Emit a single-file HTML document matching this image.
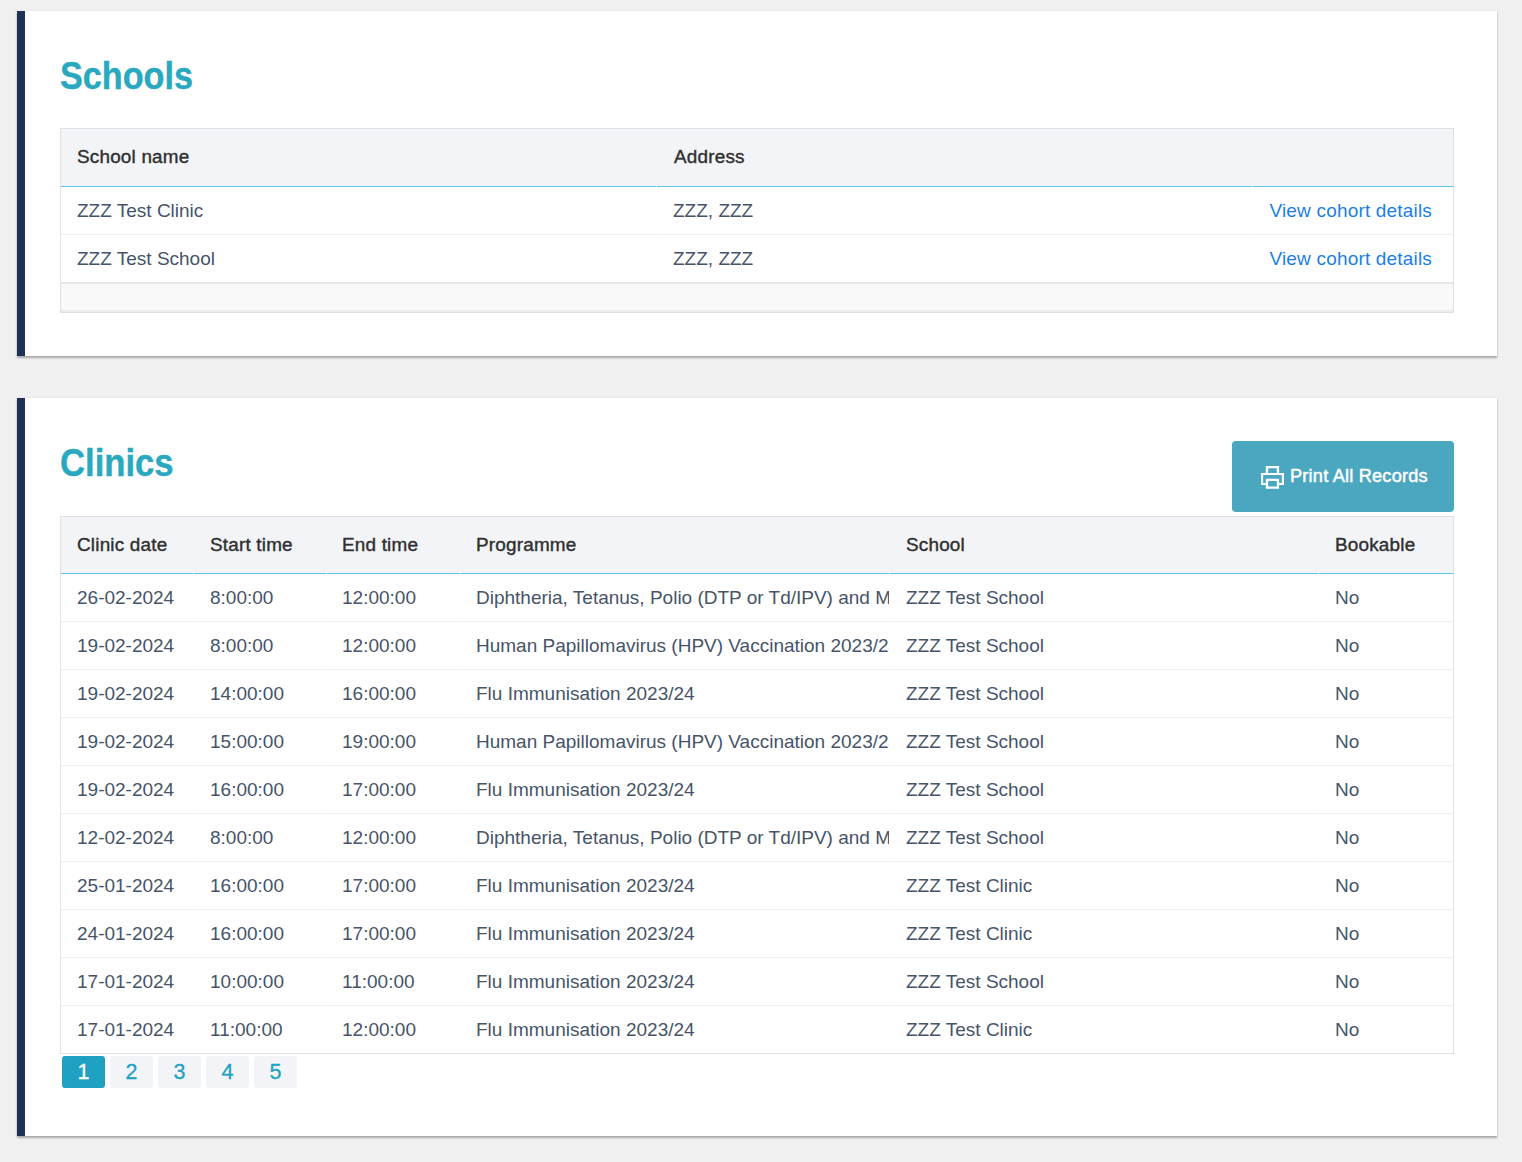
<!DOCTYPE html>
<html><head><meta charset="utf-8"><title>Schools and Clinics</title>
<style>
*{box-sizing:border-box;margin:0;padding:0}
html,body{width:1522px;height:1162px;overflow:hidden;background:#f0f0f0;font-family:"Liberation Sans",sans-serif}
.card{position:absolute;left:17px;width:1480px;background:#fff;border-left:8px solid #1e3158;box-shadow:0 2px 2px rgba(0,0,0,.3),0 0 2px rgba(0,0,0,.08)}
.h{position:absolute;left:60px;font-weight:bold;color:#29a8c0;font-size:38px;line-height:40px;white-space:nowrap;transform-origin:0 0;transform:scaleX(.9);-webkit-text-stroke:.4px #29a8c0}
.tb{position:absolute;left:60px;width:1394px;background:#fff;border:1px solid #dde1e5}
.hd{position:absolute;left:0;right:0;background:#f3f4f7;border-bottom:1px solid #5ac8e3}
.r{position:absolute;left:0;right:0;height:48px;border-bottom:1px solid #eceef1}
.c{position:absolute;top:0;white-space:nowrap;overflow:hidden;padding-left:16px}
.hd .c{font-weight:normal;font-size:18.9px;color:#303030;-webkit-text-stroke:.4px #303030;letter-spacing:.2px}
.r .c{font-size:19px;color:#465469;height:47px;line-height:47px}
a{color:#1a7fe4;text-decoration:none;letter-spacing:.18px}
.btn{position:absolute;left:1232px;top:441px;width:222px;height:71px;border-radius:4px;background:#4ba7bf;color:#fff;font-weight:normal;font-size:18.2px;-webkit-text-stroke:.45px #fff;letter-spacing:.2px}
.pg{position:absolute;top:1056px;width:43px;height:32px;border-radius:3px;background:#f2f4f7;color:#1ea1c2;font-size:21.5px;line-height:32px;text-align:center;-webkit-text-stroke:.3px currentColor}
.pg.on{background:#1ea1c2;color:#fff}
</style></head>
<body>
<div class="card" style="top:11px;height:345px"></div>
<div class="card" style="top:398px;height:738px"></div>
<div class="h" style="top:55.6px">Schools</div>
<div class="tb" style="top:128px;height:185px">
<div class="hd" style="top:0;height:58px">
<div class="c" style="left:0px;width:595px;height:57px;line-height:55px;padding-left:16px">School name</div>
<div class="c" style="left:595px;width:596px;height:57px;line-height:55px;padding-left:18px">Address</div>
<div class="c" style="left:1191px;width:201px;height:57px;line-height:55px;padding-left:16px"></div>
</div>
<div class="r" style="top:58px">
<div class="c" style="left:0;width:595px">ZZZ Test Clinic</div>
<div class="c" style="left:595px;width:596px;padding-left:17px">ZZZ, ZZZ</div>
<div class="c" style="left:1191px;width:201px;text-align:right;padding:0 21px 0 0"><a href="#">View cohort details</a></div>
</div>
<div class="r" style="top:106px">
<div class="c" style="left:0;width:595px">ZZZ Test School</div>
<div class="c" style="left:595px;width:596px;padding-left:17px">ZZZ, ZZZ</div>
<div class="c" style="left:1191px;width:201px;text-align:right;padding:0 21px 0 0"><a href="#">View cohort details</a></div>
</div>
<div style="position:absolute;left:0;right:0;top:153px;height:1px;background:#e6e6e6"></div>
<div style="position:absolute;left:0;right:0;top:154px;height:1px;background:#e6e6e6"></div>
<div style="position:absolute;left:0;right:0;top:155px;height:26px;background:#f9f9f9"></div>
<div style="position:absolute;left:0;right:0;top:181px;height:2px;background:#ebebeb"></div>
</div>
<div class="h" style="top:442.6px;transform:scaleX(.912)">Clinics</div>
<div class="btn"><svg width="23" height="23" viewBox="0 0 23 23" style="position:absolute;left:29px;top:25px">
<path fill="#fff" fill-rule="evenodd" d="M0 7H23V19H0ZM2.1 9.1H20.8V16.9H2.1Z"/>
<path fill="#fff" fill-rule="evenodd" d="M4.8 0H18.1V7.5H4.8ZM7.1 2.3H15.8V7.5H7.1Z"/>
<rect x="4.8" y="12.8" width="13.3" height="10" fill="#4ba7bf"/>
<path fill="#fff" fill-rule="evenodd" d="M4.8 12.8H18.1V22.8H4.8ZM7.1 14.9H15.8V20.6H7.1Z"/>
</svg><span style="position:absolute;left:58px;top:0;line-height:71px;white-space:nowrap">Print All Records</span></div>
<div class="tb" style="top:516px;height:538px">
<div class="hd" style="top:0;height:57px">
<div class="c" style="left:0px;width:132px;height:56px;line-height:56px;padding-left:16px">Clinic date</div>
<div class="c" style="left:132px;width:133px;height:56px;line-height:56px;padding-left:17px">Start time</div>
<div class="c" style="left:265px;width:134px;height:56px;line-height:56px;padding-left:16px">End time</div>
<div class="c" style="left:399px;width:429px;height:56px;line-height:56px;padding-left:16px">Programme</div>
<div class="c" style="left:828px;width:429px;height:56px;line-height:56px;padding-left:17px">School</div>
<div class="c" style="left:1257px;width:135px;height:56px;line-height:56px;padding-left:17px">Bookable</div>
</div>
<div class="r" style="top:57px">
<div class="c" style="left:0px;width:132px;padding-left:16px">26-02-2024</div>
<div class="c" style="left:132px;width:133px;padding-left:17px">8:00:00</div>
<div class="c" style="left:265px;width:134px;padding-left:16px">12:00:00</div>
<div class="c" style="left:399px;width:429px;padding-left:16px">Diphtheria, Tetanus, Polio (DTP or Td/IPV) and MMR Vaccination 2023/24</div>
<div class="c" style="left:828px;width:429px;padding-left:17px">ZZZ Test School</div>
<div class="c" style="left:1257px;width:135px;padding-left:17px">No</div>
</div>
<div class="r" style="top:105px">
<div class="c" style="left:0px;width:132px;padding-left:16px">19-02-2024</div>
<div class="c" style="left:132px;width:133px;padding-left:17px">8:00:00</div>
<div class="c" style="left:265px;width:134px;padding-left:16px">12:00:00</div>
<div class="c" style="left:399px;width:429px;padding-left:16px">Human Papillomavirus (HPV) Vaccination 2023/24</div>
<div class="c" style="left:828px;width:429px;padding-left:17px">ZZZ Test School</div>
<div class="c" style="left:1257px;width:135px;padding-left:17px">No</div>
</div>
<div class="r" style="top:153px">
<div class="c" style="left:0px;width:132px;padding-left:16px">19-02-2024</div>
<div class="c" style="left:132px;width:133px;padding-left:17px">14:00:00</div>
<div class="c" style="left:265px;width:134px;padding-left:16px">16:00:00</div>
<div class="c" style="left:399px;width:429px;padding-left:16px">Flu Immunisation 2023/24</div>
<div class="c" style="left:828px;width:429px;padding-left:17px">ZZZ Test School</div>
<div class="c" style="left:1257px;width:135px;padding-left:17px">No</div>
</div>
<div class="r" style="top:201px">
<div class="c" style="left:0px;width:132px;padding-left:16px">19-02-2024</div>
<div class="c" style="left:132px;width:133px;padding-left:17px">15:00:00</div>
<div class="c" style="left:265px;width:134px;padding-left:16px">19:00:00</div>
<div class="c" style="left:399px;width:429px;padding-left:16px">Human Papillomavirus (HPV) Vaccination 2023/24</div>
<div class="c" style="left:828px;width:429px;padding-left:17px">ZZZ Test School</div>
<div class="c" style="left:1257px;width:135px;padding-left:17px">No</div>
</div>
<div class="r" style="top:249px">
<div class="c" style="left:0px;width:132px;padding-left:16px">19-02-2024</div>
<div class="c" style="left:132px;width:133px;padding-left:17px">16:00:00</div>
<div class="c" style="left:265px;width:134px;padding-left:16px">17:00:00</div>
<div class="c" style="left:399px;width:429px;padding-left:16px">Flu Immunisation 2023/24</div>
<div class="c" style="left:828px;width:429px;padding-left:17px">ZZZ Test School</div>
<div class="c" style="left:1257px;width:135px;padding-left:17px">No</div>
</div>
<div class="r" style="top:297px">
<div class="c" style="left:0px;width:132px;padding-left:16px">12-02-2024</div>
<div class="c" style="left:132px;width:133px;padding-left:17px">8:00:00</div>
<div class="c" style="left:265px;width:134px;padding-left:16px">12:00:00</div>
<div class="c" style="left:399px;width:429px;padding-left:16px">Diphtheria, Tetanus, Polio (DTP or Td/IPV) and MMR Vaccination 2023/24</div>
<div class="c" style="left:828px;width:429px;padding-left:17px">ZZZ Test School</div>
<div class="c" style="left:1257px;width:135px;padding-left:17px">No</div>
</div>
<div class="r" style="top:345px">
<div class="c" style="left:0px;width:132px;padding-left:16px">25-01-2024</div>
<div class="c" style="left:132px;width:133px;padding-left:17px">16:00:00</div>
<div class="c" style="left:265px;width:134px;padding-left:16px">17:00:00</div>
<div class="c" style="left:399px;width:429px;padding-left:16px">Flu Immunisation 2023/24</div>
<div class="c" style="left:828px;width:429px;padding-left:17px">ZZZ Test Clinic</div>
<div class="c" style="left:1257px;width:135px;padding-left:17px">No</div>
</div>
<div class="r" style="top:393px">
<div class="c" style="left:0px;width:132px;padding-left:16px">24-01-2024</div>
<div class="c" style="left:132px;width:133px;padding-left:17px">16:00:00</div>
<div class="c" style="left:265px;width:134px;padding-left:16px">17:00:00</div>
<div class="c" style="left:399px;width:429px;padding-left:16px">Flu Immunisation 2023/24</div>
<div class="c" style="left:828px;width:429px;padding-left:17px">ZZZ Test Clinic</div>
<div class="c" style="left:1257px;width:135px;padding-left:17px">No</div>
</div>
<div class="r" style="top:441px">
<div class="c" style="left:0px;width:132px;padding-left:16px">17-01-2024</div>
<div class="c" style="left:132px;width:133px;padding-left:17px">10:00:00</div>
<div class="c" style="left:265px;width:134px;padding-left:16px">11:00:00</div>
<div class="c" style="left:399px;width:429px;padding-left:16px">Flu Immunisation 2023/24</div>
<div class="c" style="left:828px;width:429px;padding-left:17px">ZZZ Test School</div>
<div class="c" style="left:1257px;width:135px;padding-left:17px">No</div>
</div>
<div class="r" style="top:489px;border-bottom:0">
<div class="c" style="left:0px;width:132px;padding-left:16px">17-01-2024</div>
<div class="c" style="left:132px;width:133px;padding-left:17px">11:00:00</div>
<div class="c" style="left:265px;width:134px;padding-left:16px">12:00:00</div>
<div class="c" style="left:399px;width:429px;padding-left:16px">Flu Immunisation 2023/24</div>
<div class="c" style="left:828px;width:429px;padding-left:17px">ZZZ Test Clinic</div>
<div class="c" style="left:1257px;width:135px;padding-left:17px">No</div>
</div>
</div>
<i style="position:absolute;left:656px;top:186px;width:1px;height:1px;background:rgba(255,255,255,.75)"></i>
<i style="position:absolute;left:656px;top:234px;width:1px;height:1px;background:rgba(255,255,255,.75)"></i>
<i style="position:absolute;left:1252px;top:186px;width:1px;height:1px;background:rgba(255,255,255,.75)"></i>
<i style="position:absolute;left:1252px;top:234px;width:1px;height:1px;background:rgba(255,255,255,.75)"></i>
<i style="position:absolute;left:193px;top:573px;width:1px;height:1px;background:rgba(255,255,255,.75)"></i>
<i style="position:absolute;left:193px;top:621px;width:1px;height:1px;background:rgba(255,255,255,.75)"></i>
<i style="position:absolute;left:193px;top:669px;width:1px;height:1px;background:rgba(255,255,255,.75)"></i>
<i style="position:absolute;left:193px;top:717px;width:1px;height:1px;background:rgba(255,255,255,.75)"></i>
<i style="position:absolute;left:193px;top:765px;width:1px;height:1px;background:rgba(255,255,255,.75)"></i>
<i style="position:absolute;left:193px;top:813px;width:1px;height:1px;background:rgba(255,255,255,.75)"></i>
<i style="position:absolute;left:193px;top:861px;width:1px;height:1px;background:rgba(255,255,255,.75)"></i>
<i style="position:absolute;left:193px;top:909px;width:1px;height:1px;background:rgba(255,255,255,.75)"></i>
<i style="position:absolute;left:193px;top:957px;width:1px;height:1px;background:rgba(255,255,255,.75)"></i>
<i style="position:absolute;left:193px;top:1005px;width:1px;height:1px;background:rgba(255,255,255,.75)"></i>
<i style="position:absolute;left:326px;top:573px;width:1px;height:1px;background:rgba(255,255,255,.75)"></i>
<i style="position:absolute;left:326px;top:621px;width:1px;height:1px;background:rgba(255,255,255,.75)"></i>
<i style="position:absolute;left:326px;top:669px;width:1px;height:1px;background:rgba(255,255,255,.75)"></i>
<i style="position:absolute;left:326px;top:717px;width:1px;height:1px;background:rgba(255,255,255,.75)"></i>
<i style="position:absolute;left:326px;top:765px;width:1px;height:1px;background:rgba(255,255,255,.75)"></i>
<i style="position:absolute;left:326px;top:813px;width:1px;height:1px;background:rgba(255,255,255,.75)"></i>
<i style="position:absolute;left:326px;top:861px;width:1px;height:1px;background:rgba(255,255,255,.75)"></i>
<i style="position:absolute;left:326px;top:909px;width:1px;height:1px;background:rgba(255,255,255,.75)"></i>
<i style="position:absolute;left:326px;top:957px;width:1px;height:1px;background:rgba(255,255,255,.75)"></i>
<i style="position:absolute;left:326px;top:1005px;width:1px;height:1px;background:rgba(255,255,255,.75)"></i>
<i style="position:absolute;left:460px;top:573px;width:1px;height:1px;background:rgba(255,255,255,.75)"></i>
<i style="position:absolute;left:460px;top:621px;width:1px;height:1px;background:rgba(255,255,255,.75)"></i>
<i style="position:absolute;left:460px;top:669px;width:1px;height:1px;background:rgba(255,255,255,.75)"></i>
<i style="position:absolute;left:460px;top:717px;width:1px;height:1px;background:rgba(255,255,255,.75)"></i>
<i style="position:absolute;left:460px;top:765px;width:1px;height:1px;background:rgba(255,255,255,.75)"></i>
<i style="position:absolute;left:460px;top:813px;width:1px;height:1px;background:rgba(255,255,255,.75)"></i>
<i style="position:absolute;left:460px;top:861px;width:1px;height:1px;background:rgba(255,255,255,.75)"></i>
<i style="position:absolute;left:460px;top:909px;width:1px;height:1px;background:rgba(255,255,255,.75)"></i>
<i style="position:absolute;left:460px;top:957px;width:1px;height:1px;background:rgba(255,255,255,.75)"></i>
<i style="position:absolute;left:460px;top:1005px;width:1px;height:1px;background:rgba(255,255,255,.75)"></i>
<i style="position:absolute;left:889px;top:573px;width:1px;height:1px;background:rgba(255,255,255,.75)"></i>
<i style="position:absolute;left:889px;top:621px;width:1px;height:1px;background:rgba(255,255,255,.75)"></i>
<i style="position:absolute;left:889px;top:669px;width:1px;height:1px;background:rgba(255,255,255,.75)"></i>
<i style="position:absolute;left:889px;top:717px;width:1px;height:1px;background:rgba(255,255,255,.75)"></i>
<i style="position:absolute;left:889px;top:765px;width:1px;height:1px;background:rgba(255,255,255,.75)"></i>
<i style="position:absolute;left:889px;top:813px;width:1px;height:1px;background:rgba(255,255,255,.75)"></i>
<i style="position:absolute;left:889px;top:861px;width:1px;height:1px;background:rgba(255,255,255,.75)"></i>
<i style="position:absolute;left:889px;top:909px;width:1px;height:1px;background:rgba(255,255,255,.75)"></i>
<i style="position:absolute;left:889px;top:957px;width:1px;height:1px;background:rgba(255,255,255,.75)"></i>
<i style="position:absolute;left:889px;top:1005px;width:1px;height:1px;background:rgba(255,255,255,.75)"></i>
<i style="position:absolute;left:1318px;top:573px;width:1px;height:1px;background:rgba(255,255,255,.75)"></i>
<i style="position:absolute;left:1318px;top:621px;width:1px;height:1px;background:rgba(255,255,255,.75)"></i>
<i style="position:absolute;left:1318px;top:669px;width:1px;height:1px;background:rgba(255,255,255,.75)"></i>
<i style="position:absolute;left:1318px;top:717px;width:1px;height:1px;background:rgba(255,255,255,.75)"></i>
<i style="position:absolute;left:1318px;top:765px;width:1px;height:1px;background:rgba(255,255,255,.75)"></i>
<i style="position:absolute;left:1318px;top:813px;width:1px;height:1px;background:rgba(255,255,255,.75)"></i>
<i style="position:absolute;left:1318px;top:861px;width:1px;height:1px;background:rgba(255,255,255,.75)"></i>
<i style="position:absolute;left:1318px;top:909px;width:1px;height:1px;background:rgba(255,255,255,.75)"></i>
<i style="position:absolute;left:1318px;top:957px;width:1px;height:1px;background:rgba(255,255,255,.75)"></i>
<i style="position:absolute;left:1318px;top:1005px;width:1px;height:1px;background:rgba(255,255,255,.75)"></i>
<div class="pg on" style="left:62px">1</div>
<div class="pg" style="left:110px">2</div>
<div class="pg" style="left:158px">3</div>
<div class="pg" style="left:206px">4</div>
<div class="pg" style="left:254px">5</div>
</body></html>
